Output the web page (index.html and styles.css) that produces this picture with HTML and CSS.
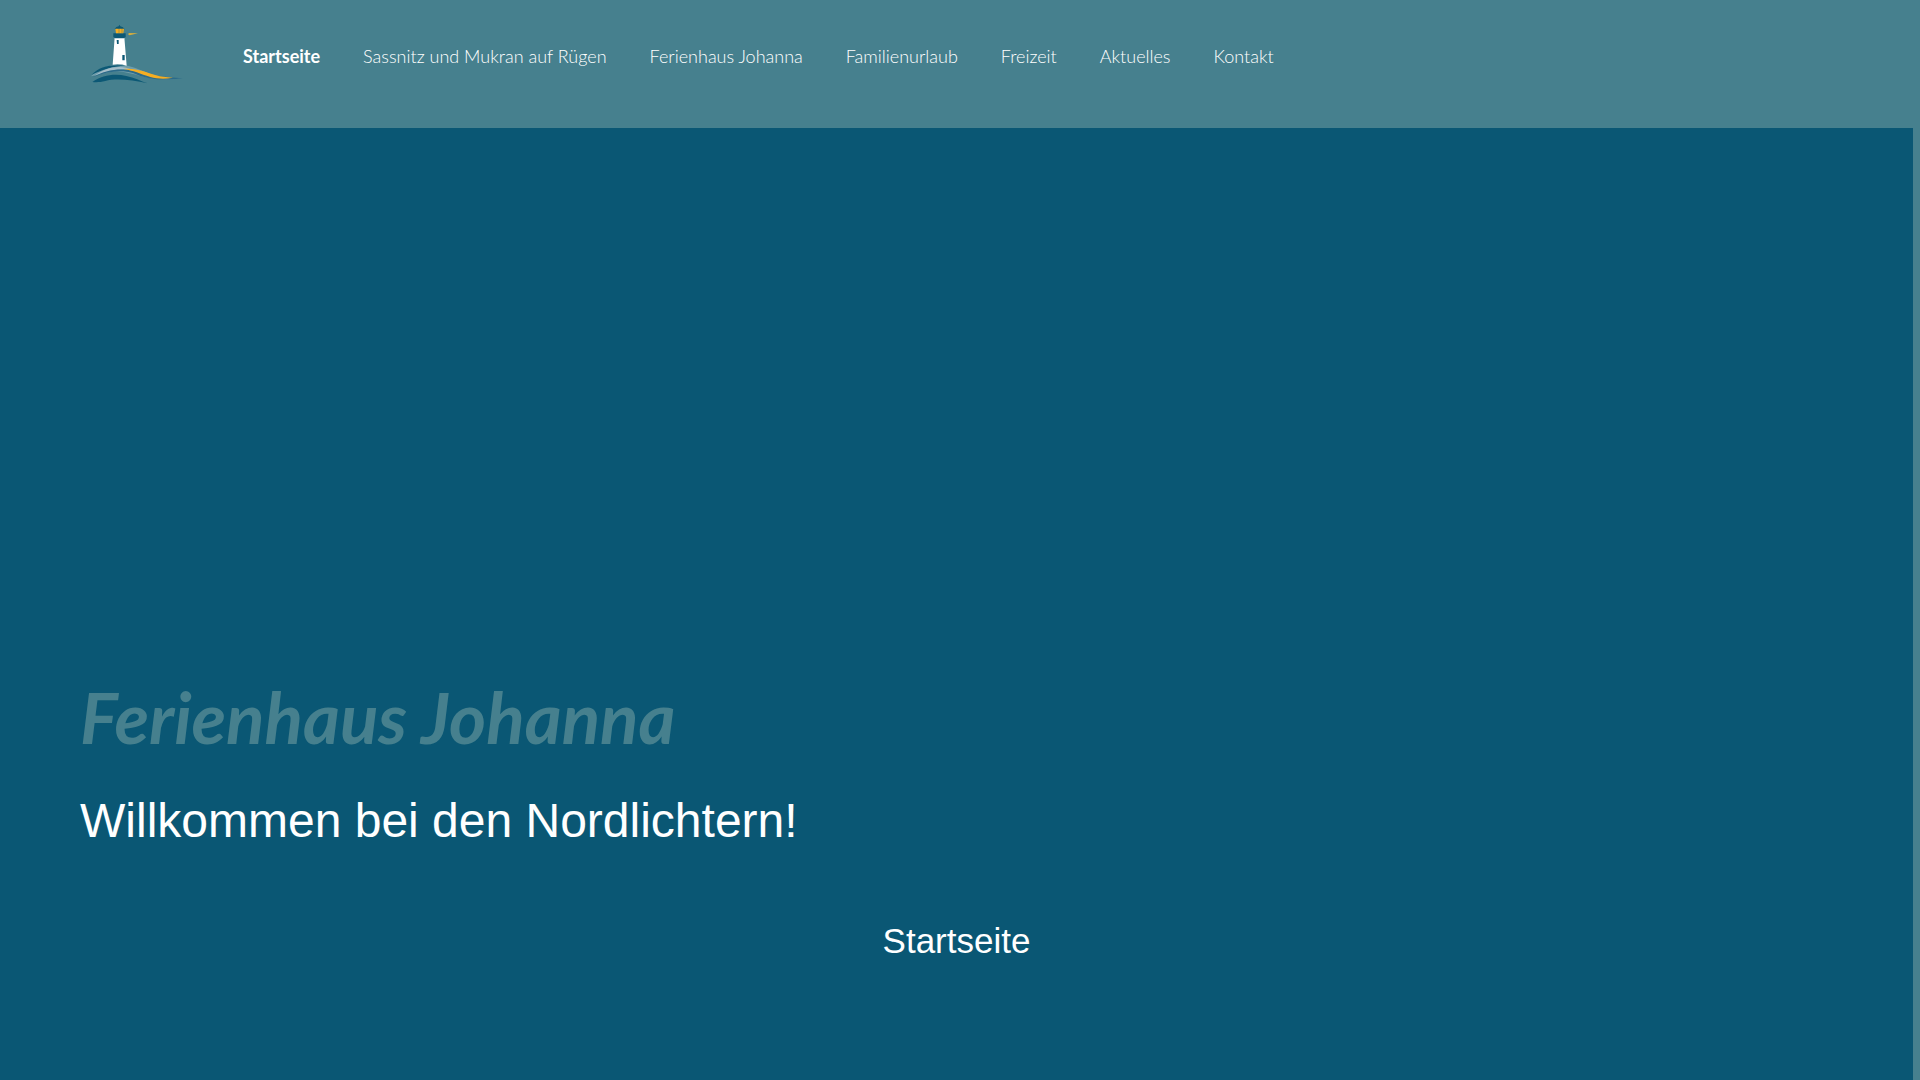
FILE: index.html
```html
<!DOCTYPE html>
<html lang="de">
<head>
<meta charset="utf-8">
<meta name="viewport" content="width=device-width, initial-scale=1">
<title>Ferienhaus Johanna</title>
<link rel="stylesheet" href="styles.css">
</head>
<body>
<header class="site-header">
  <a class="logo" href="#" aria-label="Ferienhaus Johanna">
    <svg class="logo-image" viewBox="0 0 330 240" aria-hidden="true">
      <path fill="#6f9dab" d="M33 184C55 160 86 148 122 149C158 151 190 171 225 181C252 189 276 191 302 190C267 196 231 194 198 187C155 177 124 164 88 172C66 176 49 182 33 184Z"/>
      <path fill="#0c5875" d="M35 179C58 155 90 147 137 152C94 153 66 165 35 179Z"/>
      <path fill="#a4bdc8" d="M44 182C78 156 122 148 158 165C119 158 83 168 44 182Z"/>
      <path fill="#2b6a89" d="M38 187C80 169 124 164 159 174C202 194 249 198 308 190C250 184 221 185 186 174C139 157 83 159 38 187Z"/>
      <path fill="#0c5875" d="M37 201C67 180 104 175 139 183C163 187 181 198 203 205C155 194 105 189 76 198C61 202 48 202 37 201Z"/>
      <path fill="#f5ae22" d="M130 162C170 158 197 172 228 181C244 185 257 187 279 188C252 193 231 191 211 186C181 177 160 166 130 162Z"/>
      <path fill="#fff" d="M104 67H133L140 152Q120 146 98 149Z"/>
      <path fill="#0c5875" d="M100 55H137V66L132 70H105L100 66ZM104 42Q108 35 116 34L118 29L121 34Q130 36 134 43ZM110 75H116V87H111ZM127 120H134V136H127Z"/>
      <path fill="#f5ae22" d="M106 41H132L130 55H108Z"/>
      <path stroke="#0c5875" stroke-width="1" d="M117 40V55M126 41V54"/>
      <path fill="#d6ad3d" d="M146 54L174 55L149 61L145 59Z"/>
    </svg>
  </a>
  <nav aria-label="Hauptnavigation">
    <ul class="nav-list">
      <li><a class="nav-link active" href="#" aria-current="page">Startseite</a></li>
      <li><a class="nav-link" href="#">Sassnitz und Mukran auf Rügen</a></li>
      <li><a class="nav-link" href="#">Ferienhaus Johanna</a></li>
      <li><a class="nav-link" href="#">Familienurlaub</a></li>
      <li><a class="nav-link" href="#">Freizeit</a></li>
      <li><a class="nav-link" href="#">Aktuelles</a></li>
      <li><a class="nav-link" href="#">Kontakt</a></li>
    </ul>
  </nav>
</header>
<main class="content">
  <section class="hero">
    <h1 class="hero-title">Ferienhaus Johanna</h1>
    <p class="hero-text">Willkommen bei den Nordlichtern!</p>
  </section>
  <h2 class="page-title">Startseite</h2>
</main>
</body>
</html>
```
FILE: styles.css
```css
* { box-sizing: border-box; }

body {
  display: flex;
  flex-direction: column;
  min-height: 100vh;
  margin: 0;
  background: #46808e;
  color: #fff;
  font-family: "Liberation Sans", Arial, sans-serif;
}

.site-header {
  display: flex;
  align-items: flex-start;
  gap: 53px;
  min-height: 128px;
  padding: 15px 80px;
}

.logo-image {
  display: block;
  width: 110px;
  height: 80px;
}

.nav-list {
  display: flex;
  flex-wrap: wrap;
  gap: 0 43px;
  margin: 0;
  padding: 26px 0 0;
  list-style: none;
}

.nav-link {
  color: #fff;
  font: 300 18px/30px Lato, sans-serif;
  text-decoration: none;
}

.nav-link.active { font-weight: 700; }

.content {
  flex: 1;
  margin-right: 7px;
  background: #0a5774;
}

.hero { padding: 528px 80px 0; }

.hero-title {
  margin: 0;
  color: #46808e;
  font: italic 700 71px/122px Lato, sans-serif;
}

.hero-text {
  margin: 15px 0 0;
  font-size: 48px;
  line-height: 56px;
}

.page-title {
  margin: 71px 0 0;
  font-size: 35px;
  font-weight: 400;
  line-height: 42px;
  text-align: center;
}
```
